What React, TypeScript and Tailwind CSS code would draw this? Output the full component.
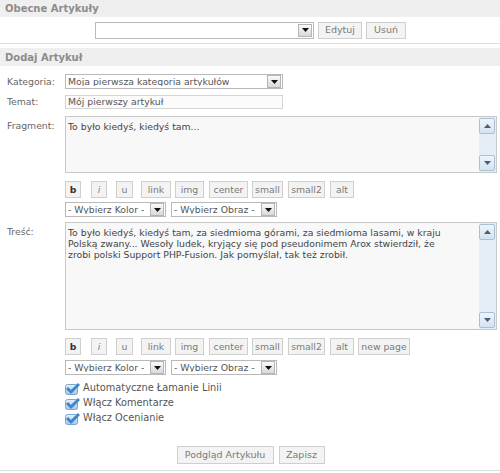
import React from "react";

const font = { fontFamily: '"DejaVu Sans", Verdana, sans-serif' };

function Arrow() {
  return (
    <span className="flex h-[13px] w-[14px] shrink-0 items-center justify-center border border-[#b5b5b5] bg-gradient-to-b from-[#fafafa] to-[#d9d9d9]">
      <svg width="7" height="4" viewBox="0 0 7 4">
        <path d="M0 0 L7 0 L3.5 4 Z" fill="#111" />
      </svg>
    </span>
  );
}

function Select({ text, className }: { text: string; className: string }) {
  return (
    <div className={`flex items-center justify-between border border-[#b9b9b9] bg-white pl-[2px] pr-[1px] text-[#555] ${className}`}>
      <span className="truncate whitespace-nowrap leading-none">{text}</span>
      <Arrow />
    </div>
  );
}

function Btn({ children, className = "" }: { children: React.ReactNode; className?: string }) {
  return (
    <div className={`flex h-[17px] items-center justify-center whitespace-nowrap border border-[#cfcfcf] bg-[#f3f3f3] leading-none text-[#7a7a7a] ${className}`}>
      {children}
    </div>
  );
}

function ScrollBtn({ up }: { up?: boolean }) {
  return (
    <div className="flex h-[16px] w-[16px] items-center justify-center rounded-[2px] border border-[#a9c0d6] bg-gradient-to-b from-[#eef4fa] to-[#d5e3f0]">
      <svg width="7" height="4" viewBox="0 0 7 4">
        {up ? <path d="M0 4 L7 4 L3.5 0 Z" fill="#4a5c7a" /> : <path d="M0 0 L7 0 L3.5 4 Z" fill="#4a5c7a" />}
      </svg>
    </div>
  );
}

function TextArea({ lines, h }: { lines: string[]; h: string }) {
  return (
    <div className={`flex w-[432px] border border-[#c8c8c8] bg-[#f8f8f8] ${h}`}>
      <div className="flex-1 pl-[2px] pt-[4px] leading-[11px] text-[#444]">
        {lines.map((l, i) => (
          <div key={i} className="whitespace-nowrap">{l}</div>
        ))}
      </div>
      <div className="flex w-[17px] flex-col justify-between bg-[#e5eef6] pt-[1px] pb-[1px] pr-[1px]">
        <ScrollBtn up />
        <ScrollBtn />
      </div>
    </div>
  );
}

function Toolbar({ extra }: { extra?: boolean }) {
  return (
    <div className="flex">
      <Btn className="w-[16px] font-bold text-[#333]">b</Btn>
      <Btn className="ml-[10px] w-[16px] italic">i</Btn>
      <Btn className="ml-[9px] w-[17px]">u</Btn>
      <Btn className="ml-[8px] w-[30px]">link</Btn>
      <Btn className="ml-[4px] w-[29px]">img</Btn>
      <Btn className="ml-[5px] w-[39px]">center</Btn>
      <Btn className="ml-[4px] w-[31px]">small</Btn>
      <Btn className="ml-[5px] w-[37px]">small2</Btn>
      <Btn className="ml-[5px] w-[24px]">alt</Btn>
      {extra && <Btn className="ml-[4px] w-[52px]">new page</Btn>}
    </div>
  );
}

function Pickers() {
  return (
    <div className="flex gap-[5px]">
      <Select text="- Wybierz Kolor -" className="h-[15px] w-[101px]" />
      <Select text="- Wybierz Obraz -" className="h-[15px] w-[106px]" />
    </div>
  );
}

function Check() {
  return (
    <svg width="15" height="13" viewBox="0 0 15 13">
      <defs>
        <linearGradient id="cg" x1="0" y1="0" x2="0" y2="1">
          <stop offset="0" stopColor="#e6f0fa" />
          <stop offset="1" stopColor="#a9c8e6" />
        </linearGradient>
      </defs>
      <rect x="0.5" y="2.5" width="12" height="10" rx="2" fill="url(#cg)" stroke="#7ea6cc" />
      <path d="M2 6 L6 10 L14 2" fill="none" stroke="#3d86cc" strokeWidth="3" strokeLinejoin="round" />
    </svg>
  );
}

export default function App() {
  return (
    <div className="w-[500px] h-[473px] bg-white text-[9.3px]" style={font}>
      <div className="flex h-[17px] items-center bg-[#efefef] px-[5px] text-[10px] font-bold text-[#8c8c8c]">
        Obecne Artykuły
      </div>
      <div className="flex h-[27px] items-center border-b border-[#dedede] pl-[95px]">
        <Select text="" className="h-[17px] w-[219px]" />
        <Btn className="ml-[4px] h-[17px] w-[44px] text-[9.5px]">Edytuj</Btn>
        <Btn className="ml-[4px] h-[17px] w-[40px] text-[9.5px]">Usuń</Btn>
      </div>
      <div className="mt-[4px] flex h-[18px] items-center bg-[#efefef] px-[5px] text-[10px] font-bold text-[#8c8c8c]">
        Dodaj Artykuł
      </div>

      <div className="flex flex-col pt-[8px]">
        <div className="flex items-center">
          <div className="w-[65px] pl-[7px] text-[#666]">Kategoria:</div>
          <Select text="Moja pierwsza kategoria artykułów" className="h-[15px] w-[218px]" />
        </div>
        <div className="mt-[6px] flex items-center">
          <div className="w-[65px] pl-[7px] text-[#666]">Temat:</div>
          <div className="flex h-[14px] w-[218px] items-center border border-[#d5d5d5] bg-[#fbfbfb] pl-[2px] leading-none text-[#555]">
            Mój pierwszy artykuł
          </div>
        </div>
        <div className="mt-[7px] flex">
          <div className="w-[65px] pl-[7px] pt-[3px] text-[#666]">Fragment:</div>
          <div className="flex flex-col">
            <TextArea lines={["To było kiedyś, kiedyś tam..."]} h="h-[57px]" />
            <div className="mt-[8px]">
              <Toolbar />
            </div>
            <div className="mt-[4px]">
              <Pickers />
            </div>
          </div>
        </div>
        <div className="mt-[5px] flex">
          <div className="w-[65px] pl-[7px] pt-[3px] text-[#666]">Treść:</div>
          <div className="flex flex-col">
            <TextArea
              lines={[
                "To było kiedyś, kiedyś tam, za siedmioma górami, za siedmioma lasami, w kraju",
                "Polską zwany... Wesoły ludek, kryjący się pod pseudonimem Arox stwierdził, że",
                "zrobi polski Support PHP-Fusion. Jak pomyślał, tak też zrobił.",
              ]}
              h="h-[108px]"
            />
            <div className="mt-[8px]">
              <Toolbar extra />
            </div>
            <div className="mt-[5px]">
              <Pickers />
            </div>
            <div className="mt-[6px] flex flex-col text-[9.8px] text-[#555]">
              {["Automatyczne Łamanie Linii", "Włącz Komentarze", "Włącz Ocenianie"].map((t) => (
                <div key={t} className="flex h-[15px] items-center">
                  <Check />
                  <span className="ml-[3px]">{t}</span>
                </div>
              ))}
            </div>
          </div>
        </div>
        <div className="mt-[20px] flex justify-center gap-[5px] pl-[1px]">
          <Btn className="h-[18px] w-[97px] text-[9.5px]">Podgląd Artykułu</Btn>
          <Btn className="h-[18px] w-[46px] text-[9.5px]">Zapisz</Btn>
        </div>
        <div className="mt-[6px] border-b border-[#dedede]" />
      </div>
    </div>
  );
}
